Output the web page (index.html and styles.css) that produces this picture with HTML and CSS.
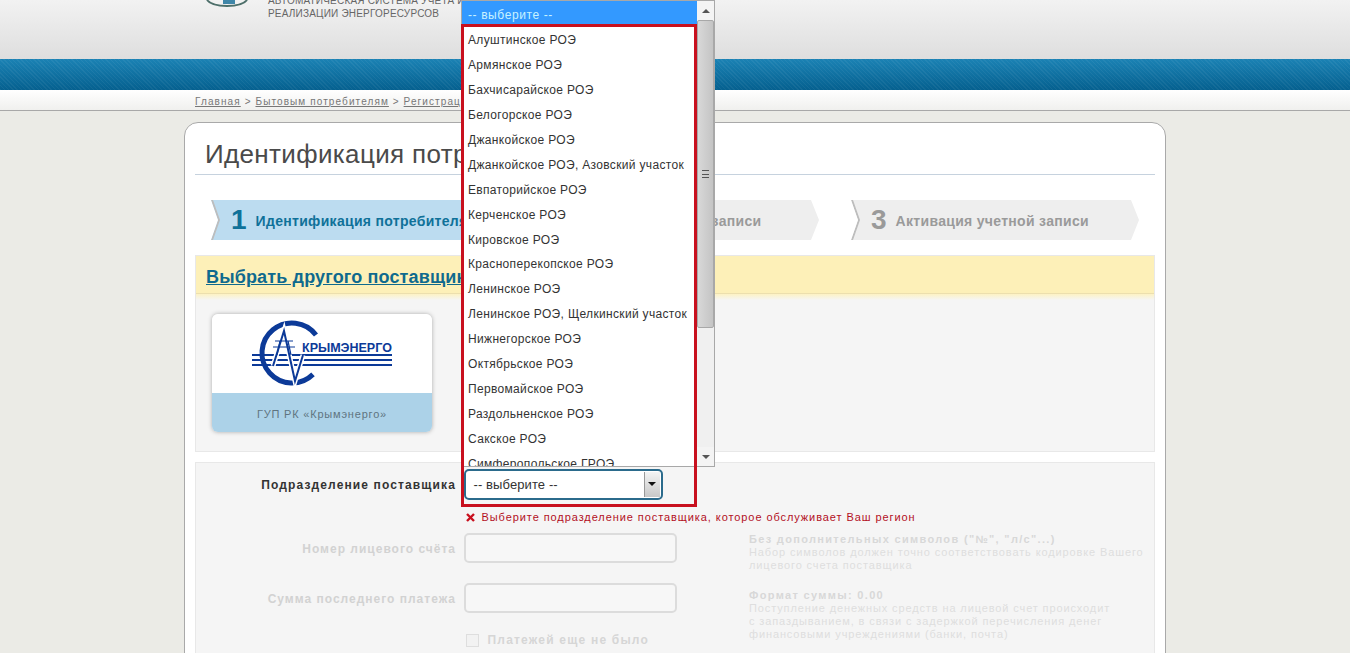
FILE: index.html
```html
<!DOCTYPE html>
<html lang="ru">
<head>
  <meta charset="UTF-8">
  <meta name="viewport" content="width=device-width, initial-scale=1.0">
  <title>Идентификация потребителя</title>
  <link rel="stylesheet" href="styles.css">
</head>
<body>
  <div class="page">
    <header class="header">
      <div class="header-inner">
        <svg class="site-logo" width="56" height="8" viewBox="0 0 56 8">
          <path d="M4 0C10 8 38 8 44 0" fill="none" stroke="#4d6f6a" stroke-width="2"/>
          <path d="M20 0h12v4H20z" fill="#3f86a8"/>
        </svg>
        <p class="site-name">АВТОМАТИЧЕСКАЯ СИСТЕМА УЧЕТА И<br>РЕАЛИЗАЦИИ ЭНЕРГОРЕСУРСОВ</p>
      </div>
    </header>
    <div class="band"></div>
    <nav class="crumbs">
      <a href="#">Главная</a> &gt; <a href="#">Бытовым потребителям</a> &gt; <a href="#">Регистрация</a>
    </nav>

    <main class="card">
      <h1 class="title">Идентификация потребителя</h1>

      <div class="steps">
        <div class="step step-active"><b>1</b><span>Идентификация потребителя</span></div>
        <div class="step"><b>2</b><span>Создание учетной записи</span></div>
        <div class="step"><b>3</b><span>Активация учетной записи</span></div>
      </div>

      <section class="supplier">
        <div class="supplier-head"><a href="#">Выбрать другого поставщика</a></div>
        <div class="supplier-body">
          <div class="tile">
            <div class="tile-logo">
              <svg width="220" height="79" viewBox="1 0 220 79">
                <path d="M105 21A30 30 0 1 0 102 60.4" fill="none" stroke="#0c3a98" stroke-width="5"/>
                <path d="M41 41H181M41 46H181M41 51H181" stroke="#0c3a98" stroke-width="2"/>
                <path d="M62 52L73 17L84 67L92 41" fill="none" stroke="#fff" stroke-width="5"/>
                <path d="M62 52L73 17L84 67L92 41" fill="none" stroke="#0c3a98" stroke-width="2"/>
                <path d="M64 27H82M62 33H84M69 27L66 41M77 27L80 41" fill="none" stroke="#0c3a98" stroke-width="1.2"/>
                <text class="logo-word" x="91" y="38">КРЫМЭНЕРГО</text>
              </svg>
            </div>
            <div class="tile-name">ГУП РК «Крымэнерго»</div>
          </div>
        </div>
      </section>

      <form class="form">
        <div class="row row-active">
          <label class="label">Подразделение поставщика</label>
          <div class="field">
            <div class="select">
              <span>-- выберите --</span>
              <i class="select-btn"></i>
            </div>
            <p class="error"><svg width="9" height="9" viewBox="0 0 9 9"><path d="M1 1l7 7M8 1L1 8" stroke="#c8101e" stroke-width="2.4"/></svg>Выберите подразделение поставщика, которое обслуживает Ваш регион</p>
          </div>
        </div>

        <div class="row row-muted row-account">
          <label class="label">Номер лицевого счёта</label>
          <div class="field"><input class="input" type="text" disabled></div>
          <div class="hint">
            <strong>Без дополнительных символов ("№", "л/с"...)</strong>
            Набор символов должен точно соответствовать кодировке Вашего<br>лицевого счета поставщика
          </div>
        </div>

        <div class="row row-muted row-sum">
          <label class="label">Сумма последнего платежа</label>
          <div class="field">
            <input class="input" type="text" disabled>
            <p class="check"><i class="checkbox"></i>Платежей еще не было</p>
          </div>
          <div class="hint">
            <strong>Формат суммы: 0.00</strong>
            Поступление денежных средств на лицевой счет происходит<br>с запаздыванием, в связи с задержкой перечисления денег<br>финансовыми учреждениями (банки, почта)
          </div>
        </div>
      </form>
    </main>

    <!-- открытый список select, лежит поверх страницы -->
    <div class="dropdown">
      <div class="options">
        <div class="option option-selected">-- выберите --</div>
        <div class="option">Алуштинское РОЭ</div>
        <div class="option">Армянское РОЭ</div>
        <div class="option">Бахчисарайское РОЭ</div>
        <div class="option">Белогорское РОЭ</div>
        <div class="option">Джанкойское РОЭ</div>
        <div class="option">Джанкойское РОЭ, Азовский участок</div>
        <div class="option">Евпаторийское РОЭ</div>
        <div class="option">Керченское РОЭ</div>
        <div class="option">Кировское РОЭ</div>
        <div class="option">Красноперекопское РОЭ</div>
        <div class="option">Ленинское РОЭ</div>
        <div class="option">Ленинское РОЭ, Щелкинский участок</div>
        <div class="option">Нижнегорское РОЭ</div>
        <div class="option">Октябрьское РОЭ</div>
        <div class="option">Первомайское РОЭ</div>
        <div class="option">Раздольненское РОЭ</div>
        <div class="option">Сакское РОЭ</div>
        <div class="option">Симферопольское ГРОЭ</div>
      </div>
      <div class="scrollbar">
        <div class="scroll-btn"><i class="arrow-up"></i></div>
        <div class="scroll-track">
          <div class="scroll-thumb"><i class="grip"></i></div>
        </div>
        <div class="scroll-btn"><i class="arrow-down"></i></div>
      </div>
    </div>
    <div class="highlight"></div>
  </div>
</body>
</html>
```

FILE: styles.css
```css
/* Reset margins and paddings */
html, body {
  margin: 0;
  padding: 0;
  background: #ebebe6;
  font-family: 'Liberation Sans', Arial, sans-serif;
}

.page {
  position: relative;
  height: 653px;
  overflow: hidden;
}

/* Header */
.header {
  height: 59px;
  background: linear-gradient(#f2f2f2, #dedede);
}

.header-inner {
  display: flex;
  gap: 9px;
  padding-left: 203px;
}

.site-logo {
  flex: none;
}

.site-name {
  margin: -6px 0 0;
  font-size: 10px;
  line-height: 13px;
  letter-spacing: 0.2px;
  white-space: nowrap;
  color: #666;
}

.band {
  height: 31px;
  background:
    repeating-linear-gradient(45deg, rgba(255, 255, 255, 0.05) 0 1px, transparent 1px 3px),
    linear-gradient(#1b82b4, #05608f);
}

.crumbs {
  height: 20px;
  padding-left: 195px;
  font-size: 10px;
  line-height: 23px;
  letter-spacing: 1.1px;
  color: #777;
  background: linear-gradient(#fff, #f0f0ee);
  border-bottom: 1px solid #a8a8a8;
}

.crumbs a {
  color: #777;
}

/* Card */
.card {
  box-sizing: border-box;
  width: 982px;
  height: 600px;
  margin: 11px 0 0 184px;
  padding: 0 10px;
  background: #fff;
  border: 1px solid #a9a9a9;
  border-radius: 14px;
}

.title {
  margin: 0;
  height: 51px;
  padding-left: 10px;
  font-size: 26px;
  font-weight: normal;
  line-height: 62px;
  letter-spacing: 0.35px;
  color: #4a4a4a;
  border-bottom: 1px solid #c6d2de;
}

.steps {
  display: flex;
  gap: 32px;
  margin: 25px 0 15px 16px;
}

.step {
  position: relative;
  display: flex;
  align-items: center;
  gap: 9px;
  width: 288px;
  height: 40px;
  padding: 1px 0 0 20px;
  box-sizing: border-box;
  white-space: nowrap;
  color: #9a9a9a;
  background: #eeeeee;
  clip-path: polygon(0 0, 280px 0, 288px 50%, 280px 100%, 0 100%, 7px 50%);
}

/* grey edge along the notch */
.step::before {
  content: "";
  position: absolute;
  left: 0;
  top: 0;
  width: 10px;
  height: 100%;
  background: #bdbdbd;
  clip-path: polygon(0 0, 2px 0, 9px 50%, 2px 100%, 0 100%, 7px 50%);
}

.step b {
  margin-top: -1px;
  font-size: 28px;
}

.step span {
  font-size: 14px;
  font-weight: bold;
  letter-spacing: 0.31px;
}

.step-active {
  color: #0f7199;
  background: #bcdcf0;
}

/* Supplier */
.supplier {
  height: 197px;
  background: #f5f5f5;
  border: 1px solid #e8e8e8;
  box-sizing: border-box;
}

.supplier-head {
  height: 26px;
  padding: 11px 0 0 10px;
  background: #fdf0b8;
  border-bottom: 1px solid #ecdfae;
}

.supplier-head a {
  font-size: 18px;
  font-weight: bold;
  letter-spacing: 0.15px;
  color: #0f6a8e;
}

.supplier-body {
  padding: 20px 16px;
  background: linear-gradient(#fdf2c4, #f5f5f5) top / 100% 6px no-repeat;
}

.tile {
  width: 220px;
  border-radius: 6px;
  overflow: hidden;
  box-shadow: 0 0 4px #aaa;
}

.tile-logo {
  height: 79px;
  background: #fff;
}

.tile-logo svg {
  display: block;
}

.logo-word {
  font-size: 12.5px;
  font-weight: bold;
  fill: #0c3a98;
}

.tile-name {
  height: 39px;
  font-size: 11px;
  line-height: 43px;
  letter-spacing: 0.8px;
  text-align: center;
  color: #5f7480;
  background: #acd2e8;
}

/* Form */
.form {
  height: 300px;
  margin-top: 10px;
  background: #f5f5f5;
  border: 1px solid #e8e8e8;
  box-sizing: border-box;
}

.row {
  display: grid;
  grid-template-columns: 260px 277px 1fr;
  column-gap: 7.5px;
}

.label {
  padding-top: 9px;
  font-size: 12px;
  font-weight: bold;
  letter-spacing: 1px;
  text-align: right;
  white-space: nowrap;
  color: #333;
}

.row-active {
  height: 64px;
  padding-top: 6px;
}

.row-active .label {
  letter-spacing: 1.12px;
}

.row-active .field {
  grid-column: 2 / 4;
}

.select {
  box-sizing: border-box;
  display: flex;
  justify-content: space-between;
  width: 199px;
  height: 31px;
  padding: 0 1px 0 8px;
  font-size: 13px;
  line-height: 27px;
  letter-spacing: 0.1px;
  color: #333;
  background: #fff;
  border: 2px solid #2b6b8c;
  border-radius: 5px;
}

.select-btn {
  position: relative;
  width: 15px;
  height: 25px;
  margin-top: 1px;
  background: linear-gradient(#f4f4f4, #c8c8c8);
  border-left: 1px solid #999;
}

.select-btn::after {
  content: "";
  position: absolute;
  left: 3px;
  top: 10px;
  border: 4px solid transparent;
  border-top: 4px solid #111;
}

.error {
  display: flex;
  align-items: center;
  gap: 7px;
  margin: 11px 0 0 2px;
  font-size: 11px;
  letter-spacing: 0.92px;
  white-space: nowrap;
  color: #b3101e;
}

.row-muted .label {
  color: #d2d2d2;
}

.row-account {
  height: 50px;
}

.input {
  display: block;
  box-sizing: border-box;
  width: 213px;
  height: 30px;
  margin: 0;
  background: #f7f7f7;
  border: 2px solid #dcdcdc;
  border-radius: 5px;
}

.hint {
  padding: 0 0 0 1px;
  font-size: 11px;
  line-height: 13px;
  letter-spacing: 0.88px;
  white-space: nowrap;
  color: #dedede;
}

.hint strong {
  display: block;
  letter-spacing: 1.33px;
  color: #d8d8d8;
}

.row-sum .hint {
  padding-top: 6px;
}

.check {
  display: flex;
  align-items: center;
  gap: 9px;
  margin: 20px 0 0 2px;
  font-size: 12px;
  font-weight: bold;
  letter-spacing: 1.2px;
  color: #d6d6d6;
}

.checkbox {
  box-sizing: border-box;
  width: 13px;
  height: 13px;
  background: #f2f2f2;
  border: 1px solid #dedede;
}

/* Open select list */
.dropdown {
  position: absolute;
  left: 462px;
  top: 1px;
  display: flex;
  width: 252px;
  height: 465px;
  overflow: hidden;
  background: #fff;
  box-shadow: 0 0 0 1px #a8a8a8;
}

.options {
  flex: 1;
  font-size: 12px;
  letter-spacing: 0.33px;
  color: #333;
}

.option {
  height: 24.95px;
  padding-left: 6px;
  line-height: 31px;
  white-space: nowrap;
}

.option-selected {
  height: 24px;
  line-height: 28px;
  letter-spacing: 0.6px;
  color: #c8f2ff;
  background: #3399ff;
}

.scrollbar {
  display: flex;
  flex-direction: column;
  width: 17px;
  background: #f0f0f0;
}

.scroll-btn {
  display: flex;
  align-items: center;
  justify-content: center;
  height: 19px;
  background: #f4f4f4;
}

.arrow-up {
  border: 4px solid transparent;
  border-top: 0;
  border-bottom: 4px solid #555;
}

.arrow-down {
  border: 4px solid transparent;
  border-bottom: 0;
  border-top: 4px solid #555;
}

.scroll-track {
  flex: 1;
}

.scroll-thumb {
  display: flex;
  align-items: center;
  justify-content: center;
  box-sizing: border-box;
  height: 308px;
  background: linear-gradient(90deg, #d8d8d8, #c4c4c4);
  border: 1px solid #a8a8a8;
  border-radius: 2px;
}

.grip {
  width: 7px;
  height: 6px;
  border-top: 1px solid #555;
  border-bottom: 1px solid #555;
  background: linear-gradient(#555, #555) center / 100% 1px no-repeat;
}

/* Red annotation frame */
.highlight {
  position: absolute;
  left: 461px;
  top: 24px;
  box-sizing: border-box;
  width: 236px;
  height: 483px;
  border: 3px solid #c8101e;
}
```
